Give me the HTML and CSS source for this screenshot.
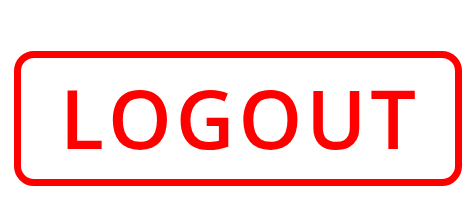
FILE: index.html
```html
<!DOCTYPE html>
<html>
<head>
<meta charset="utf-8">
<link rel="stylesheet" href="styles.css">
</head>
<body>
<div class="page">
  <div class="logout"><span class="label">LOGOUT</span></div>
</div>
</body>
</html>
```
FILE: styles.css
```css
html, body { margin: 0; padding: 0; background: #fff; }
.page {
  width: 474px;
  height: 213px;
  padding: 51px 0 0 14px;
  box-sizing: border-box;
}
.logout {
  width: 448px;
  height: 135px;
  box-sizing: border-box;
  border: 7px solid #ff0000;
  border-radius: 20px;
  display: flex;
  align-items: center;
  justify-content: center;
}
.label {
  color: #ff0000;
  font-family: "Open Sans", sans-serif;
  font-weight: 600;
  font-size: 81px;
  line-height: 1;
  letter-spacing: 4px;
  padding-left: 4px;
  margin-top: -2px;
}
```
